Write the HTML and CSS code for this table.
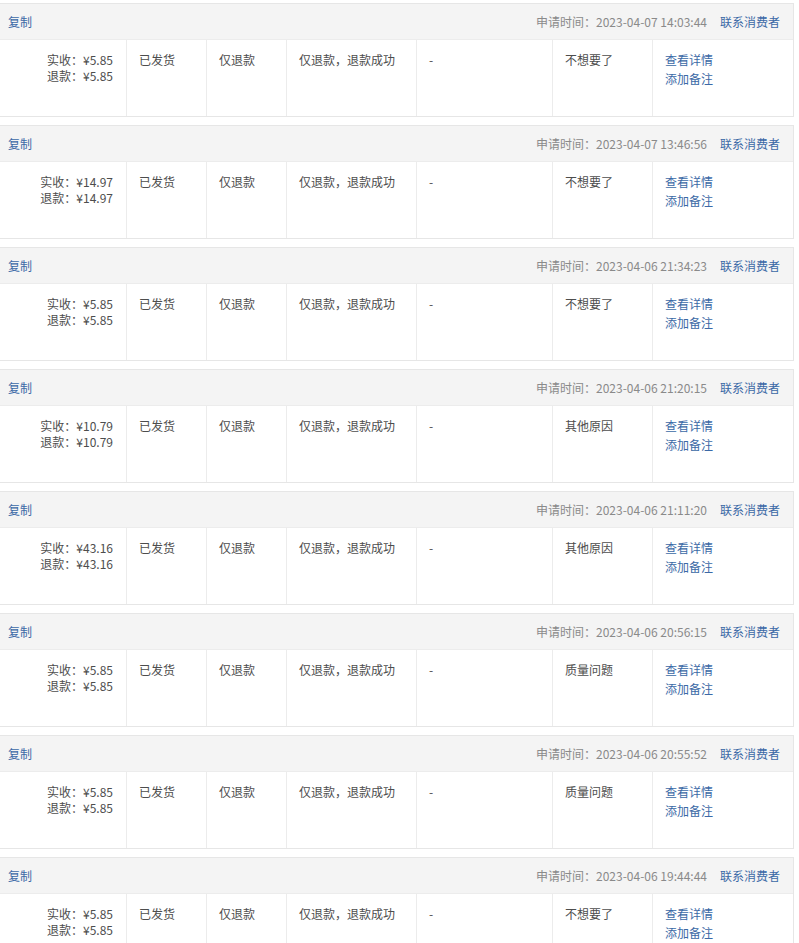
FILE: index.html
```html
<!DOCTYPE html>
<html lang="zh-CN">
<head>
<meta charset="utf-8">
<title>退款列表</title>
<link rel="stylesheet" href="styles.css">
</head>
<body>
<div class="list">
  <div class="block">
    <div class="head"><a class="link">复制</a><div class="meta"><span class="time">申请时间：2023-04-07 14:03:44</span><a class="link">联系消费者</a></div></div>
    <div class="body">
      <div class="cell amount"><div>实收：¥5.85</div><div>退款：¥5.85</div></div>
      <div class="cell">已发货</div><div class="cell">仅退款</div><div class="cell">仅退款，退款成功</div><div class="cell">-</div><div class="cell">不想要了</div>
      <div class="cell ops"><a class="link">查看详情</a><a class="link">添加备注</a></div>
    </div>
  </div>
  <div class="block">
    <div class="head"><a class="link">复制</a><div class="meta"><span class="time">申请时间：2023-04-07 13:46:56</span><a class="link">联系消费者</a></div></div>
    <div class="body">
      <div class="cell amount"><div>实收：¥14.97</div><div>退款：¥14.97</div></div>
      <div class="cell">已发货</div><div class="cell">仅退款</div><div class="cell">仅退款，退款成功</div><div class="cell">-</div><div class="cell">不想要了</div>
      <div class="cell ops"><a class="link">查看详情</a><a class="link">添加备注</a></div>
    </div>
  </div>
  <div class="block">
    <div class="head"><a class="link">复制</a><div class="meta"><span class="time">申请时间：2023-04-06 21:34:23</span><a class="link">联系消费者</a></div></div>
    <div class="body">
      <div class="cell amount"><div>实收：¥5.85</div><div>退款：¥5.85</div></div>
      <div class="cell">已发货</div><div class="cell">仅退款</div><div class="cell">仅退款，退款成功</div><div class="cell">-</div><div class="cell">不想要了</div>
      <div class="cell ops"><a class="link">查看详情</a><a class="link">添加备注</a></div>
    </div>
  </div>
  <div class="block">
    <div class="head"><a class="link">复制</a><div class="meta"><span class="time">申请时间：2023-04-06 21:20:15</span><a class="link">联系消费者</a></div></div>
    <div class="body">
      <div class="cell amount"><div>实收：¥10.79</div><div>退款：¥10.79</div></div>
      <div class="cell">已发货</div><div class="cell">仅退款</div><div class="cell">仅退款，退款成功</div><div class="cell">-</div><div class="cell">其他原因</div>
      <div class="cell ops"><a class="link">查看详情</a><a class="link">添加备注</a></div>
    </div>
  </div>
  <div class="block">
    <div class="head"><a class="link">复制</a><div class="meta"><span class="time">申请时间：2023-04-06 21:11:20</span><a class="link">联系消费者</a></div></div>
    <div class="body">
      <div class="cell amount"><div>实收：¥43.16</div><div>退款：¥43.16</div></div>
      <div class="cell">已发货</div><div class="cell">仅退款</div><div class="cell">仅退款，退款成功</div><div class="cell">-</div><div class="cell">其他原因</div>
      <div class="cell ops"><a class="link">查看详情</a><a class="link">添加备注</a></div>
    </div>
  </div>
  <div class="block">
    <div class="head"><a class="link">复制</a><div class="meta"><span class="time">申请时间：2023-04-06 20:56:15</span><a class="link">联系消费者</a></div></div>
    <div class="body">
      <div class="cell amount"><div>实收：¥5.85</div><div>退款：¥5.85</div></div>
      <div class="cell">已发货</div><div class="cell">仅退款</div><div class="cell">仅退款，退款成功</div><div class="cell">-</div><div class="cell">质量问题</div>
      <div class="cell ops"><a class="link">查看详情</a><a class="link">添加备注</a></div>
    </div>
  </div>
  <div class="block">
    <div class="head"><a class="link">复制</a><div class="meta"><span class="time">申请时间：2023-04-06 20:55:52</span><a class="link">联系消费者</a></div></div>
    <div class="body">
      <div class="cell amount"><div>实收：¥5.85</div><div>退款：¥5.85</div></div>
      <div class="cell">已发货</div><div class="cell">仅退款</div><div class="cell">仅退款，退款成功</div><div class="cell">-</div><div class="cell">质量问题</div>
      <div class="cell ops"><a class="link">查看详情</a><a class="link">添加备注</a></div>
    </div>
  </div>
  <div class="block">
    <div class="head"><a class="link">复制</a><div class="meta"><span class="time">申请时间：2023-04-06 19:44:44</span><a class="link">联系消费者</a></div></div>
    <div class="body">
      <div class="cell amount"><div>实收：¥5.85</div><div>退款：¥5.85</div></div>
      <div class="cell">已发货</div><div class="cell">仅退款</div><div class="cell">仅退款，退款成功</div><div class="cell">-</div><div class="cell">不想要了</div>
      <div class="cell ops"><a class="link">查看详情</a><a class="link">添加备注</a></div>
    </div>
  </div>
</div>
</body>
</html>
```
FILE: styles.css
```css
html, body {
  margin: 0;
  padding: 0;
  background: #fff;
}
body {
  font-family: "Noto Sans CJK SC", "Noto Sans", sans-serif;
  font-size: 12px;
  line-height: 16px;
  color: #4d4d4d;
}
.list {
  display: flex;
  flex-direction: column;
  gap: 8px;
  padding-top: 3px;
  width: 794px;
}
.block {
  border: 1px solid #e6e6e6;
  border-left: none;
}
.head {
  height: 35px;
  background: #f4f4f4;
  border-bottom: 1px solid #ececec;
  display: flex;
  align-items: center;
  justify-content: space-between;
  padding: 0 13px 0 8px;
}
.meta {
  display: flex;
  gap: 13px;
}
.time {
  color: #8a8a8a;
}
.link {
  color: #3b69a6;
  text-decoration: none;
}
.body {
  display: grid;
  grid-template-columns: 126px 80px 80px 130px 136px 100px 1fr;
  height: 76px;
}
.cell {
  border-left: 1px solid #ececec;
  padding: 12px 12px 0 12px;
}
.cell:first-child {
  border-left: none;
}
.amount {
  text-align: right;
  padding-right: 13px;
}
.ops {
  display: flex;
  flex-direction: column;
  align-items: flex-start;
  gap: 3px;
}
```
